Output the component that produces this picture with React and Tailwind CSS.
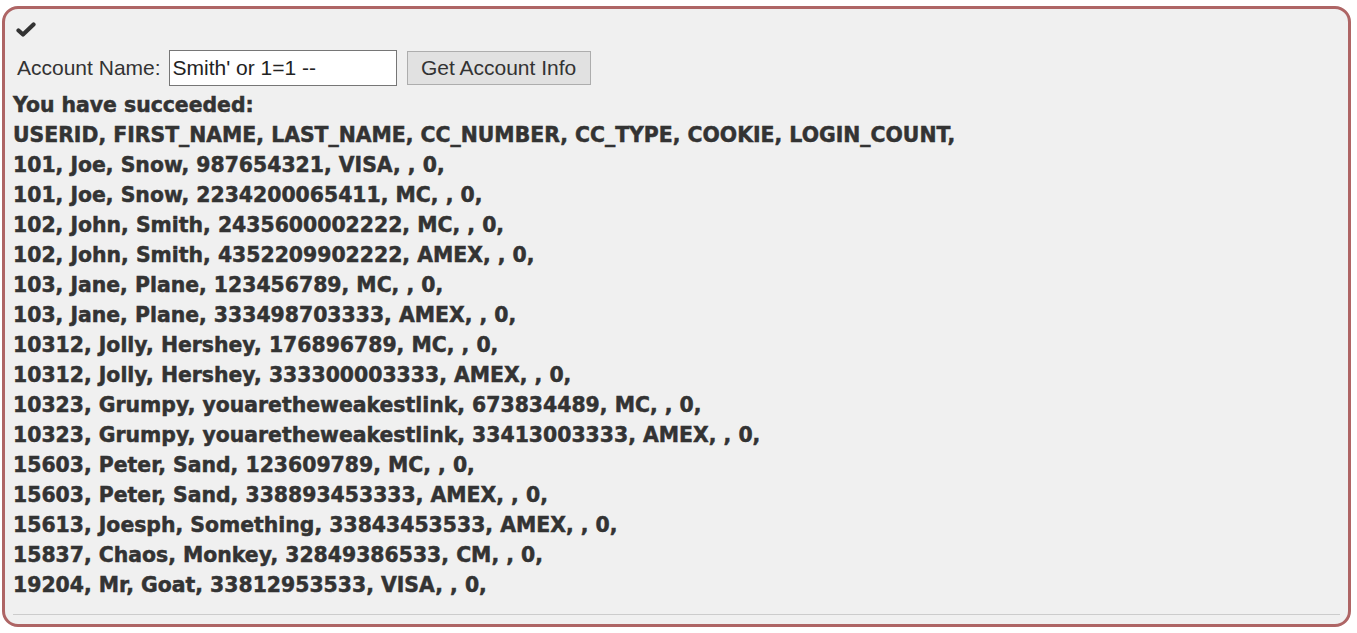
import React from "react";

const rows = [
  "USERID, FIRST_NAME, LAST_NAME, CC_NUMBER, CC_TYPE, COOKIE, LOGIN_COUNT,",
  "101, Joe, Snow, 987654321, VISA, , 0,",
  "101, Joe, Snow, 2234200065411, MC, , 0,",
  "102, John, Smith, 2435600002222, MC, , 0,",
  "102, John, Smith, 4352209902222, AMEX, , 0,",
  "103, Jane, Plane, 123456789, MC, , 0,",
  "103, Jane, Plane, 333498703333, AMEX, , 0,",
  "10312, Jolly, Hershey, 176896789, MC, , 0,",
  "10312, Jolly, Hershey, 333300003333, AMEX, , 0,",
  "10323, Grumpy, youaretheweakestlink, 673834489, MC, , 0,",
  "10323, Grumpy, youaretheweakestlink, 33413003333, AMEX, , 0,",
  "15603, Peter, Sand, 123609789, MC, , 0,",
  "15603, Peter, Sand, 338893453333, AMEX, , 0,",
  "15613, Joesph, Something, 33843453533, AMEX, , 0,",
  "15837, Chaos, Monkey, 32849386533, CM, , 0,",
  "19204, Mr, Goat, 33812953533, VISA, , 0,",
];

export default function App() {
  return (
    <div className="w-[1357px] h-[633px] bg-white pl-[2px] pr-[6px] pt-[6px] pb-[6px] font-['Liberation_Sans',Arial,sans-serif] text-[#333]">
      <div className="h-full rounded-[16px] border-[3px] border-[#ae6565] bg-[#f0f0f0] px-[8px] pt-[12px] flex flex-col">
        <svg width="20" height="16" viewBox="0 0 20 16" className="ml-[3px] mt-[1px]">
          <path d="M2.5 8.5 L7 12.5 L17.5 2.5" fill="none" stroke="#333" strokeWidth="4.2" strokeLinecap="round" strokeLinejoin="round" />
        </svg>
        <div className="flex items-center mt-[12px] ml-[4px] h-[36px]">
          <span className="text-[21px] mr-[8px]">Account Name:</span>
          <input
            readOnly
            value="Smith' or 1=1 --"
            className="w-[228px] h-[36px] border border-[#767676] bg-white px-[3px] text-[21px] text-[#222] outline-none"
          />
          <button className="ml-[10px] w-[184px] h-[34px] border border-[#adadad] bg-[#e1e1e1] text-[21px] text-[#333]">
            Get Account Info
          </button>
        </div>
        <div className="mt-[4px] font-bold text-[20.4px] leading-[30px] font-['DejaVu_Sans',sans-serif] [-webkit-text-stroke:0.5px_#333]">
          <div>You have succeeded:</div>
          {rows.map((r, i) => (
            <div key={i}>{r}</div>
          ))}
        </div>
        <div className="mt-auto mb-[9px] border-t border-[#cccccc]" />
      </div>
    </div>
  );
}
